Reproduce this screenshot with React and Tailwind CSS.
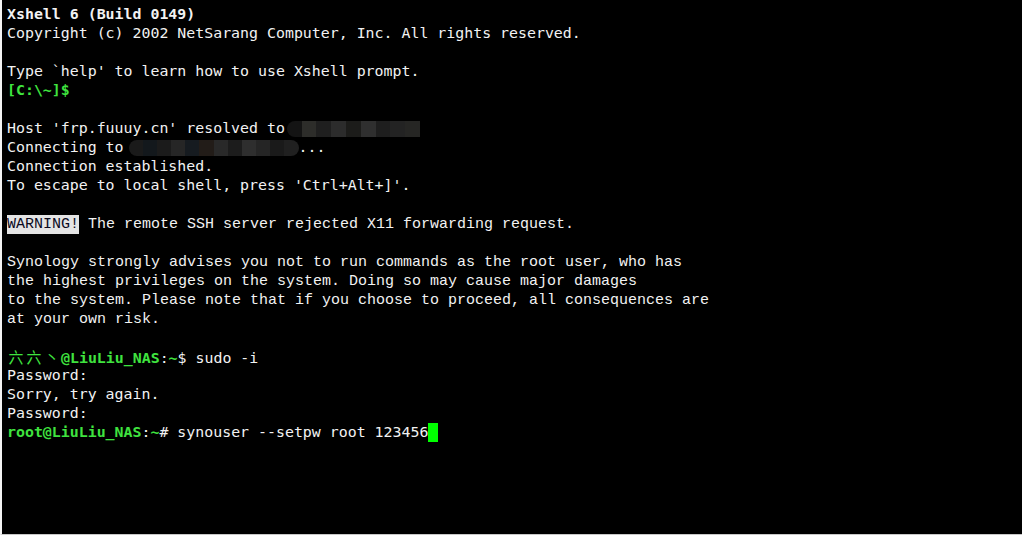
import React from "react";

const G = "text-[#3fe33f] font-bold";
const W = "text-[#f2f2f2]";

function Blur({ blocks, className = "" }) {
  return (
    <span className={`inline-flex align-middle h-[16px] overflow-hidden ${className}`}>
      {blocks.map((c, i) => (
        <span key={i} className="inline-block h-full w-[15px]" style={{ background: c }} />
      ))}
    </span>
  );
}

function Cjk({ ch }) {
  return (
    <span className="inline-block w-[18px] text-center font-normal font-['Noto_Sans_CJK_SC',sans-serif]">{ch}</span>
  );
}

export default function App() {
  const narrow = "font-['Liberation_Mono',monospace] text-[15px]";

  const lines = [
    <span className={`${W} font-bold`}>Xshell 6 (Build 0149)</span>,
    <span className={W}>Copyright (c) 2002 NetSarang Computer, Inc. All rights reserved.</span>,
    null,
    <span className={W}>Type `help' to learn how to use Xshell prompt.</span>,
    <span className={G}>[C:\~]$</span>,
    null,
    <span className={W}>
      Host 'frp.fuuuy.cn' resolved to{" "}
      <Blur
        className="rounded-l-full -ml-[7px] w-[133px]"
        blocks={["#141414", "#2d2d2a", "#1f1f1f", "#2c2c2c", "#1c1c1a", "#2f2f2f", "#1e1e1e", "#232323", "#262624"]}
      />
    </span>,
    <span className={W}>
      Connecting to{" "}
      <Blur
        className="rounded-full -ml-[4px] w-[170px]"
        blocks={["#1a1a1a", "#13181c", "#1b1b1b", "#262626", "#161b20", "#221c18", "#292929", "#1c1c1c", "#2e2e2e", "#252525", "#1a1a1a", "#202020"]}
      />
      ...
    </span>,
    <span className={W}>Connection established.</span>,
    <span className={W}>To escape to local shell, press 'Ctrl+Alt+]'.</span>,
    null,
    <span className={`${W} ${narrow}`}>
      <span className="bg-[#e4e4e4] text-[#0a0a1e] inline-block h-[19px]">WARNING!</span> The remote SSH server rejected X11 forwarding request.
    </span>,
    null,
    <span className={`${W} ${narrow}`}>Synology strongly advises you not to run commands as the root user, who has</span>,
    <span className={`${W} ${narrow}`}>the highest privileges on the system. Doing so may cause major damages</span>,
    <span className={`${W} ${narrow}`}>to the system. Please note that if you choose to proceed, all consequences are</span>,
    <span className={`${W} ${narrow}`}>at your own risk.</span>,
    null,
    <span>
      <span className={G}>
        <Cjk ch="六" />
        <Cjk ch="六" />
        <Cjk ch="丶" />
        @LiuLiu_NAS
      </span>
      <span className={W}>:</span>
      <span className={G}>~</span>
      <span className={W}>$ sudo -i</span>
    </span>,
    <span className={W}>Password:</span>,
    <span className={W}>Sorry, try again.</span>,
    <span className={W}>Password:</span>,
    <span className="flex items-start">
      <span className={G}>root@LiuLiu_NAS</span>
      <span className={W}>:</span>
      <span className={G}>~</span>
      <span className={W}># synouser --setpw root 123456</span>
      <span className="inline-block w-[10px] h-[19px] bg-[#00ff00]" />
    </span>,
  ];

  return (
    <div className="w-[1022px] h-[535px] bg-black border-l-[2px] border-l-[#f4f4f4] border-b border-b-[#c8c8c8] overflow-hidden">
      <div className="pl-[5px] pt-[5px] font-['DejaVu_Sans_Mono',monospace] text-[14.9px]">
        {lines.map((l, i) => (
          <div key={i} className="h-[19px] leading-[19px] whitespace-pre">
            {l}
          </div>
        ))}
      </div>
    </div>
  );
}
